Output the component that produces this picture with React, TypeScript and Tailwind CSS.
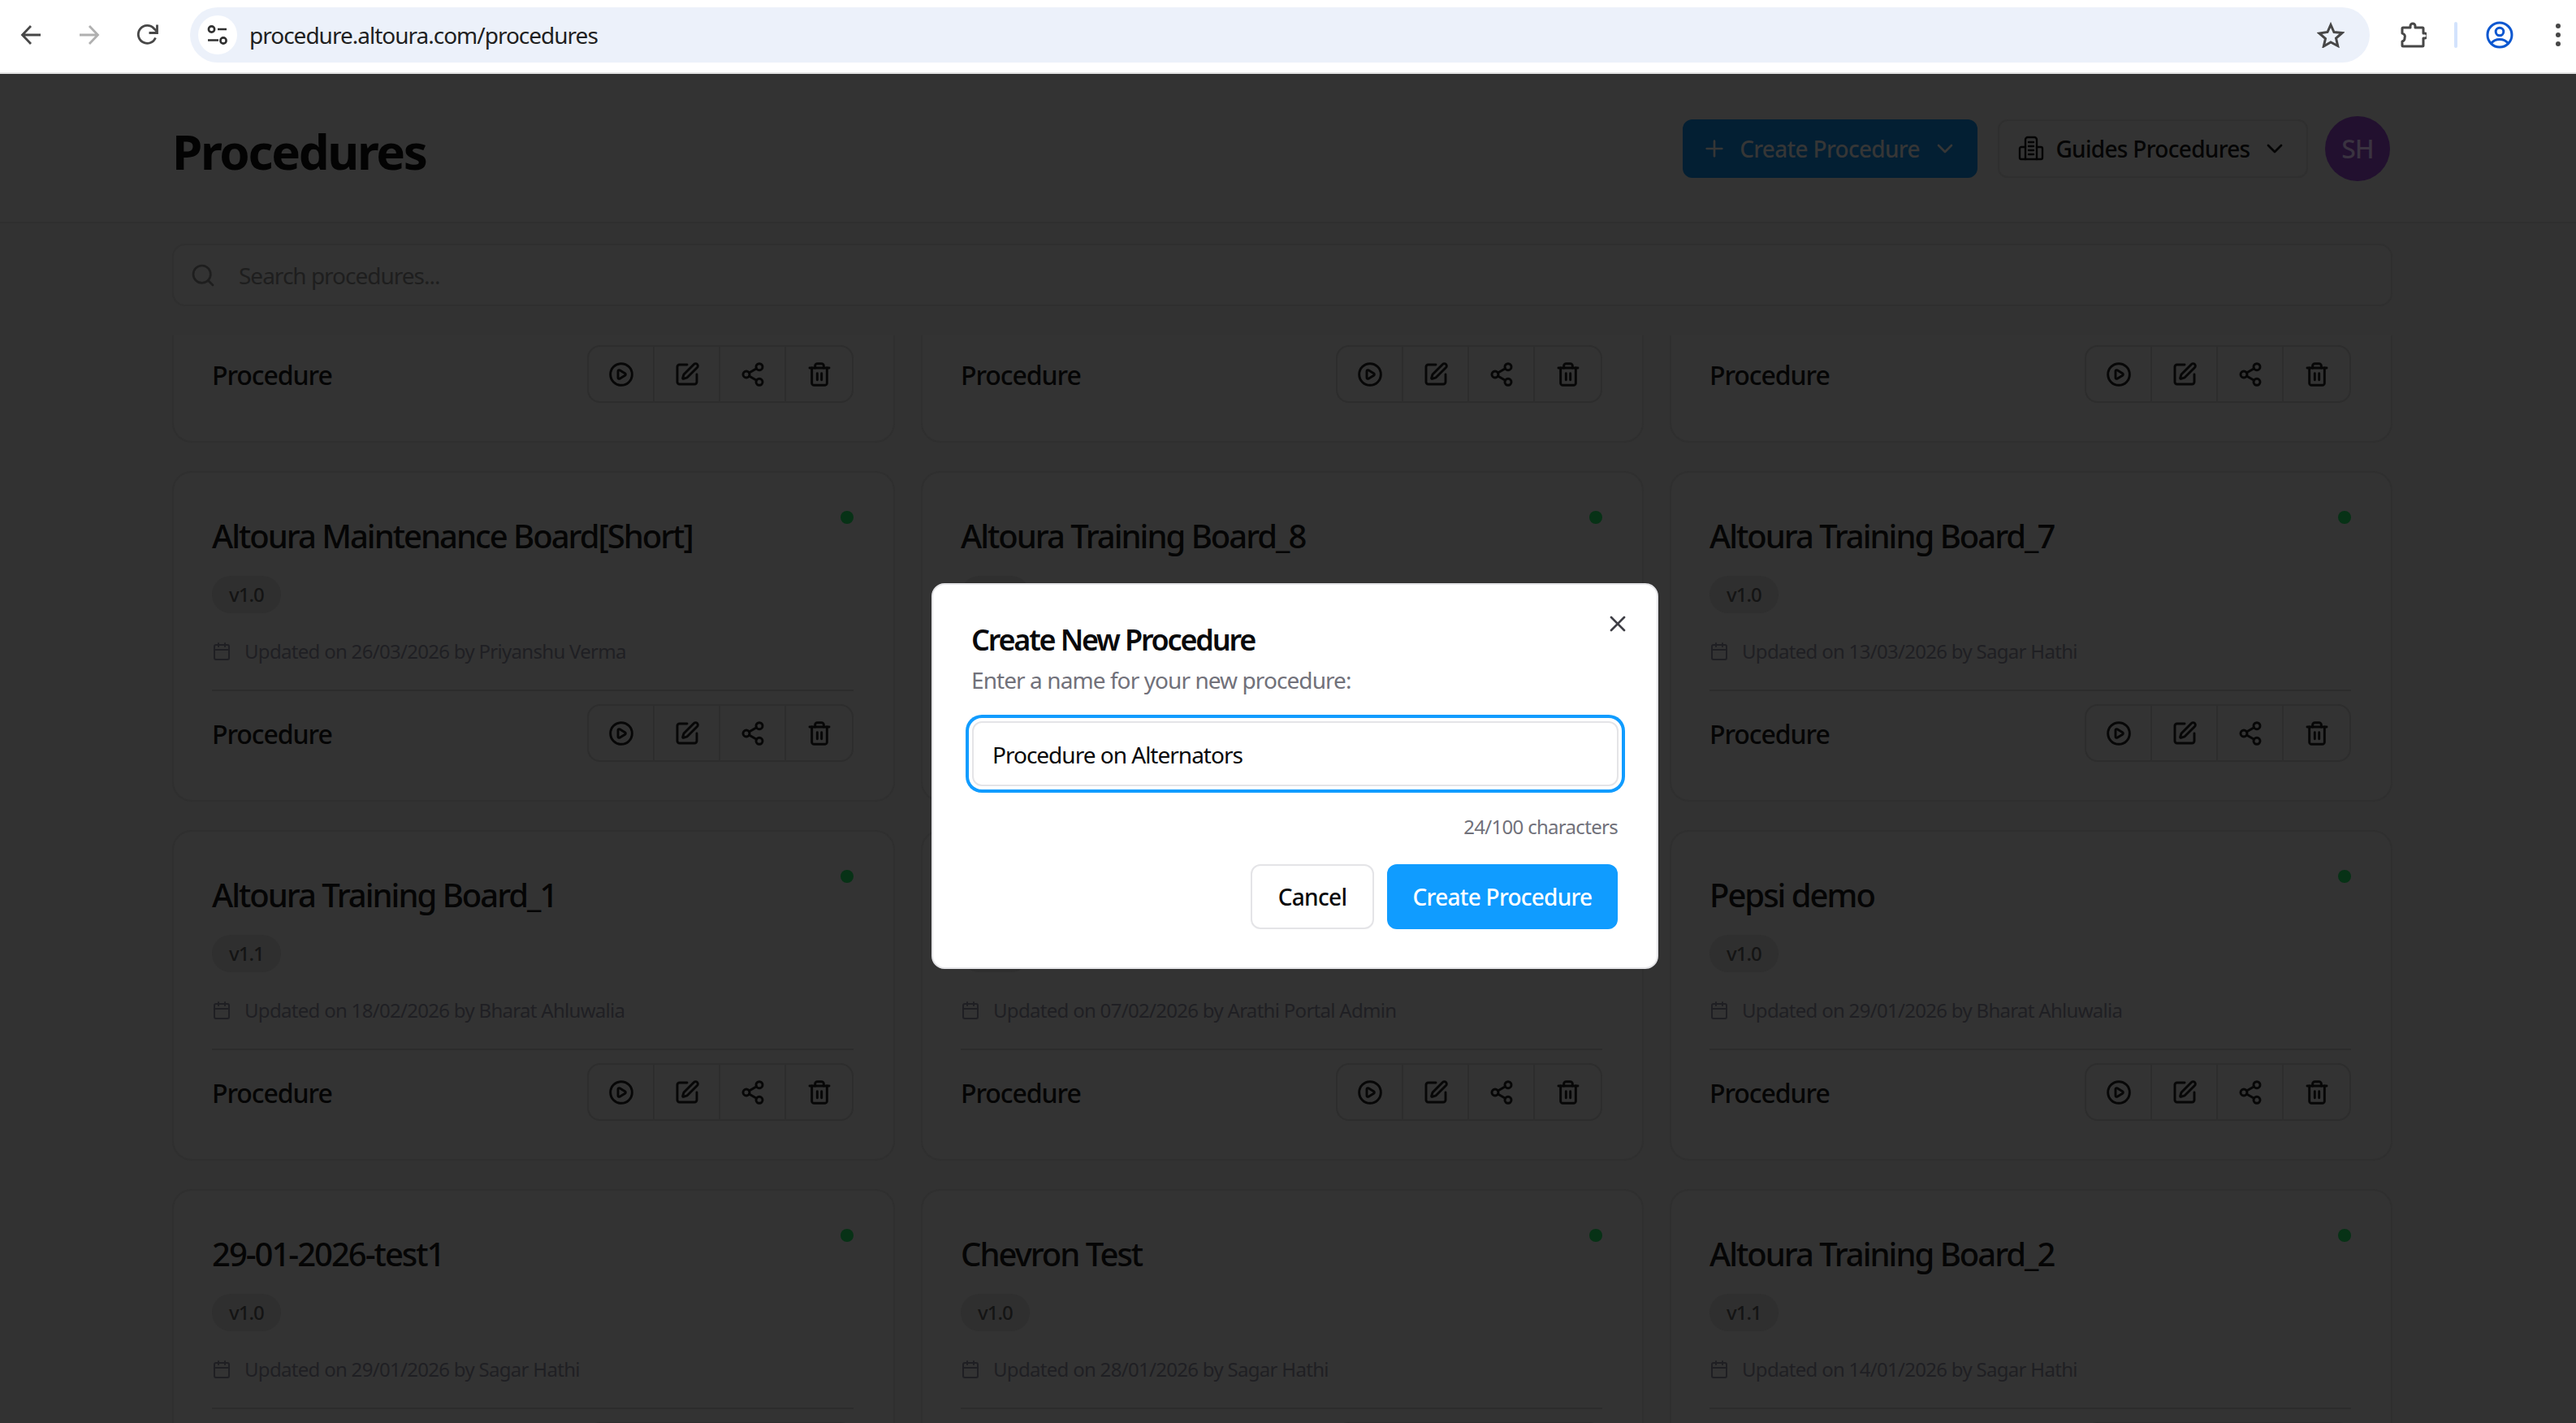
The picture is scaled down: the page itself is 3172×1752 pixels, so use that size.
import { Calendar, ChevronDown, CirclePlay, Plus, Search, Share2, SquarePen, Trash2, X } from "lucide-react";

const font = { fontFamily: '"Noto Sans", "Open Sans", sans-serif' };

type P = { title: string; version: string; meta: string };

const rows: P[] = [
  { title: "Altoura Maintenance Board[Short]", version: "v1.0", meta: "Updated on 26/03/2026 by Priyanshu Verma" },
  { title: "Altoura Training Board_8", version: "v1.0", meta: "Updated on 20/03/2026 by Sagar Hathi" },
  { title: "Altoura Training Board_7", version: "v1.0", meta: "Updated on 13/03/2026 by Sagar Hathi" },
  { title: "Altoura Training Board_1", version: "v1.1", meta: "Updated on 18/02/2026 by Bharat Ahluwalia" },
  { title: "Altoura Training Board_3", version: "v1.0", meta: "Updated on 07/02/2026 by Arathi Portal Admin" },
  { title: "Pepsi demo", version: "v1.0", meta: "Updated on 29/01/2026 by Bharat Ahluwalia" },
  { title: "29-01-2026-test1", version: "v1.0", meta: "Updated on 29/01/2026 by Sagar Hathi" },
  { title: "Chevron Test", version: "v1.0", meta: "Updated on 28/01/2026 by Sagar Hathi" },
  { title: "Altoura Training Board_2", version: "v1.1", meta: "Updated on 14/01/2026 by Sagar Hathi" },
];

function Footer() {
  const cell = "flex w-[81px] items-center justify-center";
  return (
    <div className="flex h-[71px] items-center justify-between">
      <span className="pt-[2px] text-[32px] leading-[44px] font-medium tracking-[-1.05px] text-[#050505]">Procedure</span>
      <div className="flex h-[71px] divide-x-2 divide-[#2d2d2d] rounded-[16px] border-2 border-[#2d2d2d] text-[#070707]">
        <div className={cell}><CirclePlay size={32} strokeWidth={2.2} /></div>
        <div className={cell}><SquarePen size={32} strokeWidth={2.2} /></div>
        <div className={cell}><Share2 size={32} strokeWidth={2.2} /></div>
        <div className={cell}><Trash2 size={32} strokeWidth={2.2} /></div>
      </div>
    </div>
  );
}

function Card({ p }: { p: P }) {
  return (
    <div className="h-[407px] rounded-[24px] border-2 border-[#2f2f2f] bg-[#333333] pl-[47px] pr-[49px] pt-[47px]">
      <div className="flex items-start justify-between">
        <h3 className="mt-[3px] text-[40px] leading-[56px] font-medium tracking-[-2px] text-[#050505]">{p.title}</h3>
        <span className="h-[16px] w-[16px] rounded-full bg-[#073216]" />
      </div>
      <div className="mt-[21px] flex">
        <span className="flex h-[46px] items-center rounded-full bg-[#2f2f2f] px-[21px] text-[24px] font-medium tracking-[-1px] text-[#141414]">{p.version}</span>
      </div>
      <div className="mt-[30px] flex h-[34px] items-center gap-[16px] text-[#1f1f23]">
        <Calendar size={24} className="shrink-0" />
        <span className="text-[24px] leading-[34px] tracking-[-0.7px]">{p.meta}</span>
      </div>
      <div className="mt-[30px] border-t-2 border-[#2c2c2c] pt-[16px]">
        <Footer />
      </div>
    </div>
  );
}

function PartialCard() {
  return (
    <div className="h-[132px] rounded-b-[24px] border-x-2 border-b-2 border-[#2f2f2f] bg-[#333333] pl-[47px] pr-[49px] pt-[12px]">
      <Footer />
    </div>
  );
}

function GuidesIcon() {
  return (
    <svg width="32" height="32" viewBox="0 0 32 32" fill="none" stroke="#050505" strokeWidth="2.4" strokeLinejoin="round" strokeLinecap="round">
      <path d="M9 29V5a3 3 0 0 1 3-3h8a3 3 0 0 1 3 3v24" />
      <path d="M9 14H4a2 2 0 0 0-2 2v11a2 2 0 0 0 2 2h24a2 2 0 0 0 2-2V16a2 2 0 0 0-2-2h-5" />
      <path d="M13 8h6M13 13h6M13 18h6M13 23h6" />
    </svg>
  );
}

function Toolbar() {
  return (
    <div className="flex h-[91px] items-center border-b-2 border-[#e3e3e3] bg-white pb-[4px] pl-[14px] pr-[10px]">
      <div className="flex w-[48px] justify-center">
        <svg width="26" height="26" viewBox="0 0 26 26" fill="none" stroke="#474747" strokeWidth="2.8"><path d="M25 13H3M13 2 2.5 13 13 24" /></svg>
      </div>
      <div className="ml-[24px] flex w-[48px] justify-center">
        <svg width="26" height="26" viewBox="0 0 26 26" fill="none" stroke="#b0b0b0" strokeWidth="2.8"><path d="M1 13h22M13 2l10.500 11L13 24" /></svg>
      </div>
      <div className="ml-[24px] flex w-[48px] justify-center">
        <svg width="28" height="28" viewBox="0 0 28 28" fill="none" stroke="#474747" strokeWidth="2.8"><path d="M23.500 17.500A11 11 0 1 1 21.500 6L25 9.500" /><path d="M25.500 1.500v10h-10" /></svg>
      </div>
      <div className="ml-[28px] flex h-[68px] flex-1 items-center rounded-full bg-[#ecf1fa] pl-[10px] pr-[31px]">
        <div className="flex h-[48px] w-[48px] items-center justify-center rounded-full bg-white">
          <svg width="26" height="26" viewBox="0 0 26 26" fill="none" stroke="#303030" strokeWidth="2.6">
            <circle cx="5.5" cy="6" r="3.6" /><path d="M13 6h11M1 19.500h13" /><circle cx="20" cy="20" r="3.6" />
          </svg>
        </div>
        <span className="ml-[15px] flex-1 text-[28px] tracking-[-1px] text-[#1f1f1f]">procedure.altoura.com/procedures</span>
        <svg width="34" height="32" viewBox="0 0 34 32" fill="none" stroke="#474747" strokeWidth="3" strokeLinejoin="miter"><path d="m17 3.500 4 9 10 1-7.500 6.500 2.200 9.500L17 25l-8.700 5 2.200-9.500L3 14l10-1.500z" /></svg>
      </div>
      <div className="ml-[30px] flex w-[48px] justify-center">
        <svg width="32" height="32" viewBox="0 0 32 32" fill="none" stroke="#474747" strokeWidth="3" strokeLinejoin="round"><path d="M3 7h9V5a3 3 0 0 1 6 0v2h9a1 1 0 0 1 1 1v6h2a3 3 0 0 1 0 6h-2v9a1 1 0 0 1-1 1H3a1 1 0 0 1-1-1v-5a4 4 0 0 0 3-4.500A4 4 0 0 0 2 14V8a1 1 0 0 1 1-1z" /></svg>
      </div>
      <div className="ml-[26px] h-[32px] w-[4px] rounded-full bg-[#d3e3fd]" />
      <div className="ml-[28px] flex w-[48px] justify-center">
        <svg width="34" height="34" viewBox="0 0 34 34" fill="none" stroke="#0b57d0" strokeWidth="3"><circle cx="17" cy="17" r="15" /><circle cx="17" cy="13" r="4.800" /><path d="M6.500 27.500C9 24 13 22.500 17 22.500s8 1.500 10.500 5" /></svg>
      </div>
      <div className="ml-[36px] flex w-[24px] flex-col items-center gap-[5px]">
        <span className="h-[6px] w-[6px] rounded-full bg-[#474747]" />
        <span className="h-[6px] w-[6px] rounded-full bg-[#474747]" />
        <span className="h-[6px] w-[6px] rounded-full bg-[#474747]" />
      </div>
    </div>
  );
}

function Modal() {
  return (
    <div className="absolute left-[1147px] top-[718px] h-[475px] w-[895px] rounded-[16px] border-2 border-[#e4e4e7] bg-white pl-[47px] pr-[47px] pt-[44px]">
      <X size={32} className="absolute right-[32px] top-[32px] text-[#3f3f46]" />
      <h2 className="text-[36px] leading-[48px] font-semibold tracking-[-2.2px] text-[#09090b]">Create New Procedure</h2>
      <p className="mt-[5px] text-[28px] leading-[40px] tracking-[-0.92px] text-[#71717a]">Enter a name for your new procedure:</p>
      <input
        readOnly
        value="Procedure on Alternators"
        style={font}
        className="ml-[1px] mt-[31px] h-[80px] w-[796px] rounded-[12px] border-2 border-[#e4e4e7] bg-white px-[23px] pt-[1px] text-[28px] tracking-[-1px] text-[#09090b] ring-4 ring-[#109cff] ring-offset-4 outline-none"
      />
      <p className="mt-[33px] pr-[1px] text-right text-[24px] leading-[34px] tracking-[-0.7px] text-[#71717a]">24/100 characters</p>
      <div className="mt-[29px] flex justify-end gap-[16px] pr-[1px]">
        <button style={font} className="flex h-[80px] w-[152px] items-center justify-center rounded-[12px] border-2 border-[#e4e4e7] bg-white text-[28px] font-medium tracking-[-0.7px] text-[#09090b]">Cancel</button>
        <button style={font} className="flex h-[80px] w-[284px] items-center justify-center rounded-[12px] bg-[#109cff] text-[28px] font-medium tracking-[-0.75px] text-white">Create Procedure</button>
      </div>
    </div>
  );
}

export default function App() {
  return (
    <div style={font} className="relative h-[1752px] w-[3172px] overflow-hidden bg-[#323232]">
      <Toolbar />
      <header className="flex h-[184px] items-center justify-between border-b-2 border-[#2f2f2f] bg-[#333333] pl-[212px] pr-[229px]">
        <h1 className="pt-[8px] text-[60px] leading-[72px] font-bold tracking-[-2.3px] text-[#030303]">Procedures</h1>
        <div className="flex items-center pt-[2px]">
          <div className="flex h-[72px] w-[363px] items-center justify-between rounded-[12px] bg-[#031f33] pl-[23px] pr-[24px] text-[#363636]">
            <Plus size={32} />
            <span className="text-[28px] font-medium tracking-[-0.7px]">Create Procedure</span>
            <ChevronDown size={32} />
          </div>
          <div className="ml-[25px] flex h-[72px] w-[382px] items-center justify-between rounded-[12px] border-2 border-[#2f2f2f] pl-[23px] pr-[23px] text-[#050505]">
            <GuidesIcon />
            <span className="text-[28px] font-medium tracking-[-0.7px]">Guides Procedures</span>
            <ChevronDown size={32} />
          </div>
          <div className="ml-[21px] flex h-[80px] w-[80px] items-center justify-center rounded-full bg-[#22102f] text-[32px] font-medium tracking-[-1px] text-[#3a3340]">SH</div>
        </div>
      </header>
      <div className="pl-[212px] pr-[226px] pt-[25px]">
        <div className="flex h-[77px] items-center gap-[28px] rounded-[16px] border-2 border-[#2f2f2f] bg-[#333333] pl-[20px] text-[#1e1e1e]">
          <Search size={32} />
          <span className="text-[28px] tracking-[-1px]">Search procedures...</span>
        </div>
        <div className="mt-[36px] grid grid-cols-3 gap-x-[32px] gap-y-[35px]">
          <PartialCard />
          <PartialCard />
          <PartialCard />
          {rows.map((p) => (
            <Card key={p.title} p={p} />
          ))}
        </div>
      </div>
      <Modal />
    </div>
  );
}
